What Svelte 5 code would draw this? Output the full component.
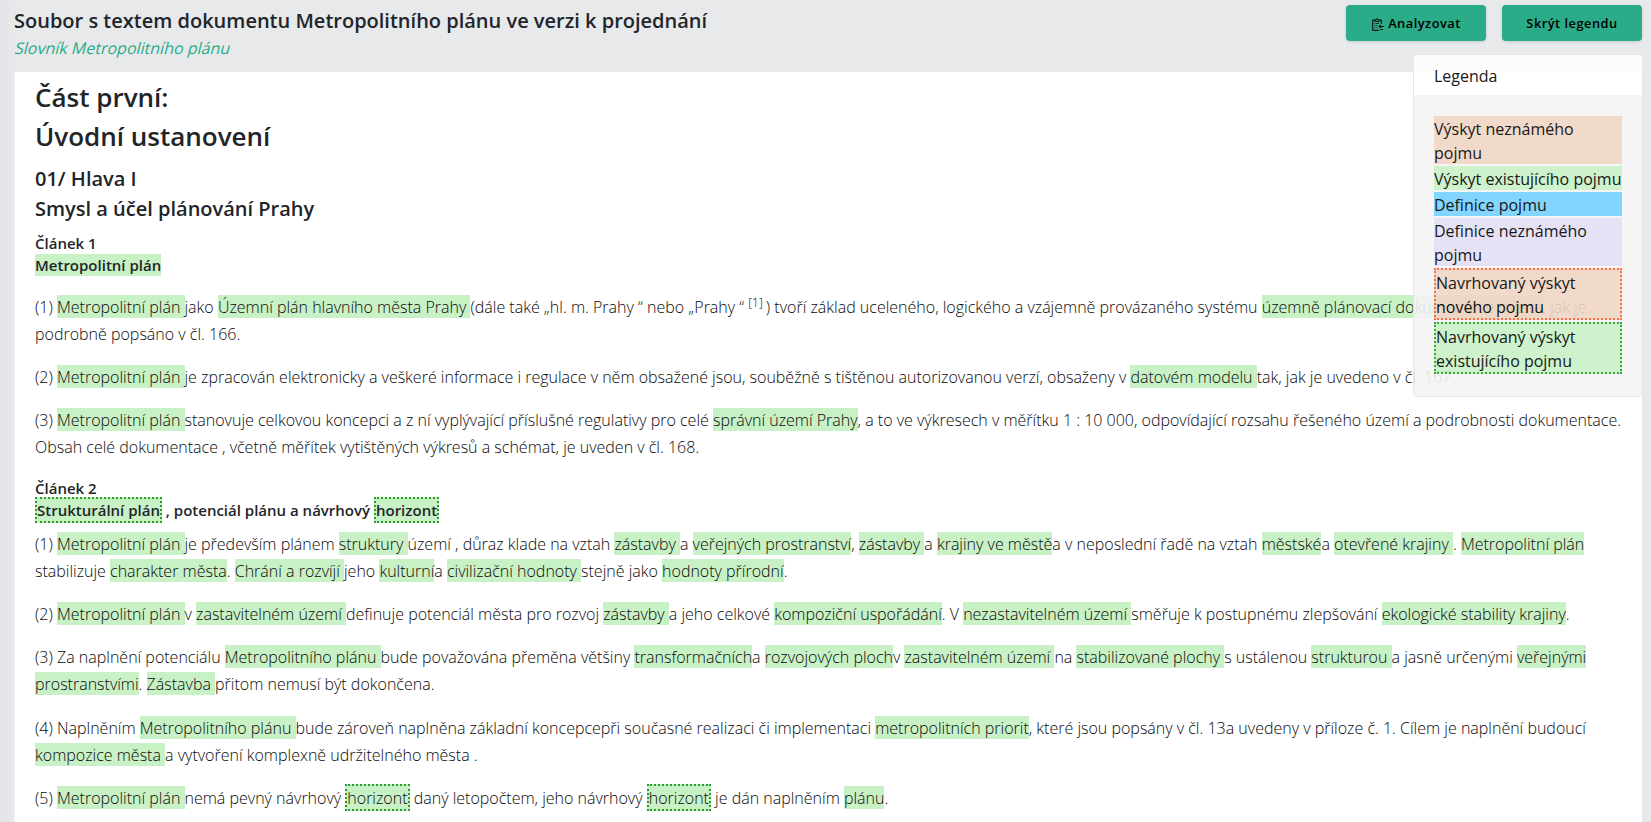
<script>
  const articles = [
    {
      number: 'Článek 1',
      title: '{Metropolitní plán}',
      spaced: true,
      paragraphs: [
        '(1) {Metropolitní plán }jako {Územní plán hlavního města Prahy }(dále také „hl. m. Prahy “ nebo „Prahy “ ^[1] ^) tvoří základ uceleného, logického a vzájemně provázaného systému {územně plánovací dokumentace města}, jak je podrobně popsáno v čl. 166.',
        '(2) {Metropolitní plán }je zpracován elektronicky a veškeré informace i regulace v něm obsažené jsou, souběžně s tištěnou autorizovanou verzí, obsaženy v {datovém modelu }tak, jak je uvedeno v čl. 167.',
        '(3) {Metropolitní plán }stanovuje celkovou koncepci a z ní vyplývající příslušné regulativy pro celé {správní území Prahy}, a to ve výkresech v měřítku 1 : 10 000, odpovídající rozsahu řešeného území a podrobnosti dokumentace. Obsah celé dokumentace , včetně měřítek vytištěných výkresů a schémat, je uveden v čl. 168.'
      ]
    },
    {
      number: 'Článek 2',
      title: '~Strukturální plán~ , potenciál plánu a návrhový ~horizont~',
      spaced: false,
      paragraphs: [
        '(1) {Metropolitní plán }je především plánem {struktury }území , důraz klade na vztah {zástavby }a {veřejných prostranství}, {zástavby }a {krajiny ve městě}a v neposlední řadě na vztah {městské}a {otevřené krajiny }. {Metropolitní plán }stabilizuje {charakter města}. {Chrání a rozvíjí }jeho {kulturní}a {civilizační hodnoty }stejně jako {hodnoty přírodní}.',
        '(2) {Metropolitní plán }v {zastavitelném území }definuje potenciál města pro rozvoj {zástavby }a jeho celkové {kompoziční uspořádání}. V {nezastavitelném území }směřuje k postupnému zlepšování {ekologické stability krajiny}.',
        '(3) Za naplnění potenciálu {Metropolitního plánu }bude považována přeměna většiny {transformačních}a {rozvojových ploch}v {zastavitelném území }na {stabilizované plochy }s ustálenou {strukturou }a jasně určenými {veřejnými prostranstvími}. {Zástavba }přitom nemusí být dokončena.',
        '(4) Naplněním {Metropolitního plánu }bude zároveň naplněna základní koncepcepři současné realizaci či implementaci {metropolitních priorit}, které jsou popsány v čl. 13a uvedeny v příloze č. 1. Cílem je naplnění budoucí {kompozice města }a vytvoření komplexně udržitelného města .',
        '(5) {Metropolitní plán }nemá pevný návrhový ~horizont~ daný letopočtem, jeho návrhový ~horizont~ je dán naplněním {plánu}.'
      ]
    }
  ];

  const legend = [
    ['unknown', 'Výskyt neznámého pojmu'],
    ['known', 'Výskyt existujícího pojmu'],
    ['definition', 'Definice pojmu'],
    ['unknown-definition', 'Definice neznámého pojmu'],
    ['unknown suggested', 'Navrhovaný výskyt nového pojmu'],
    ['known suggested', 'Navrhovaný výskyt existujícího pojmu']
  ];

  // {term} is an occurrence, ~term~ a suggested occurrence, ^text^ a footnote mark
  const parse = (s) =>
    s.split(/(\{[^}]*\}|~[^~]*~|\^[^^]*\^)/).filter(Boolean).map((t) => {
      const kind = { '{': 'term', '~': 'suggest', '^': 'note' }[t[0]];
      return kind ? { kind, text: t.slice(1, -1) } : { kind: 'plain', text: t };
    });
</script>

{#snippet rich(source)}{#each parse(source) as part}{#if part.kind === 'term'}<span class="term">{part.text}</span>{:else if part.kind === 'suggest'}<span class="term dotted">{part.text}</span>{:else if part.kind === 'note'}<sup>{part.text}</sup>{:else}{part.text}{/if}{/each}{/snippet}

<div class="page">
  <header>
    <div>
      <h1>Soubor s textem dokumentu Metropolitního plánu ve verzi k projednání</h1>
      <a class="vocabulary" href="#slovnik">Slovník Metropolitního plánu</a>
    </div>
    <div class="actions">
      <button>
        <svg viewBox="0 0 12 13" width="12" height="13" fill="none" stroke="currentColor">
          <path d="M2.500 2H.7v10.300h6.500M7.500 2h1.800v4M2.800 3.300h4.400V1.700H6.300L5 .6 3.700 1.700h-.9z" stroke-width="1" />
          <path d="M2.300 5.500h1M4.300 5.500H7M2.300 7.500h1M4.300 7.500h1.200M2.300 9.500h1M4.300 9.500h1.200" stroke-width=".8" />
          <path d="M12 8.500H8M11 11.500H8.500" stroke-width="1" />
          <path d="M8.800 6.500 6.500 8.500l2.300 2z" fill="currentColor" stroke="none" />
        </svg>
        Analyzovat
      </button>
      <button>Skrýt legendu</button>
    </div>
  </header>

  <main>
    <h2>Část první:<br />Úvodní ustanovení</h2>
    <h3>01/ Hlava I<br />Smysl a účel plánování Prahy</h3>
    {#each articles as article}
      <section>
        <h4 class:spaced={article.spaced}>{article.number}<br />{@render rich(article.title)}</h4>
        {#each article.paragraphs as paragraph}
          <p>{@render rich(paragraph)}</p>
        {/each}
      </section>
    {/each}
  </main>

  <aside>
    <div class="legend-head">Legenda</div>
    <div class="legend-body">
      {#each legend as [kind, label]}
        <div class="entry {kind}"><span>{label}</span></div>
      {/each}
    </div>
  </aside>
</div>

<style>
  :global(body) { margin: 0; background: #e8e9eb; overflow: hidden; }
  .page {
    position: relative;
    box-sizing: border-box;
    height: 822px;
    overflow: hidden;
    padding: 0 9px 0 14px;
    font: 16px/1.5 "Open Sans", sans-serif;
    color: #212529;
    background: linear-gradient(90deg, #e4e5e9, #e8e9eb 14px);
  }
  header { display: flex; justify-content: space-between; height: 72px; }
  h1, h2, h3, h4, p { margin: 0; }
  h1 { font-size: 20px; line-height: 29px; font-weight: 600; padding-top: 6px; }
  .vocabulary {
    display: block;
    width: max-content;
    color: #2aac88;
    text-decoration: none;
    line-height: 24px;
    margin-top: 1px;
    transform: skewX(-14deg);
    transform-origin: 0 18px;
  }
  .actions { display: flex; gap: 16px; padding-top: 5px; align-items: flex-start; }
  button {
    display: flex;
    align-items: center;
    justify-content: center;
    gap: 5px;
    box-sizing: border-box;
    width: 140px;
    height: 36px;
    padding: 0;
    border: 0;
    border-radius: 4px;
    background: #2aac88;
    color: #000;
    font: 600 12.800px "Open Sans", sans-serif;
    letter-spacing: .5px;
    white-space: nowrap;
    box-shadow: 0 1px 3px rgba(0, 0, 0, .12);
  }
  button svg { margin: 3px -1px 0 1px; }
  main { background: #fff; border-left: 1px solid #efeff1; height: 750px; box-sizing: border-box; padding: 6px 20px 0; }
  h2 { font-size: 26px; line-height: 39px; font-weight: 600; }
  h3 { font-size: 20px; line-height: 30px; font-weight: 600; padding-top: 8px; margin-bottom: 8px; }
  h4 { font-size: 15px; line-height: 22.400px; font-weight: 600; margin-bottom: 9.300px; }
  h4.spaced { margin-bottom: 16.700px; }
  section { margin-bottom: -1px; }
  p { font-size: 16px; line-height: 27.200px; font-weight: 300; padding-bottom: 16px; color: #0a0a0a; }
  sup { font-size: 75%; line-height: 0; position: relative; top: -.5em; vertical-align: baseline; }
  .term { background: #c9f1c6; padding: 1px 0 0; }
  h4 .term { padding: 1px 0; }
  .dotted { border: 2px dotted #2b9c2b; }
  aside {
    position: absolute;
    top: 55px;
    right: 9px;
    width: 228px;
    height: 341px;
    box-sizing: border-box;
    border-radius: 4px;
    overflow: hidden;
    opacity: .9;
    color: #000;
    background: #f4f4f4;
    box-shadow: 0 0 0 1px #e4e4e4;
  }
  .legend-head { height: 40px; line-height: 43px; padding-left: 20px; background: #fff; }
  .legend-body { padding: 21px 20px; }
  .entry { margin-bottom: 2px; }
  .entry span { position: relative; top: 1px; }
  .unknown { background: #f1d6c5; }
  .known { background: #c9f1c6; }
  .definition { background: #75d1ff; }
  .unknown-definition { background: #e3dff6; }
  .suggested { border: 2px dotted #f3633a; }
  .known.suggested { border-color: #2b9c2b; }
</style>
